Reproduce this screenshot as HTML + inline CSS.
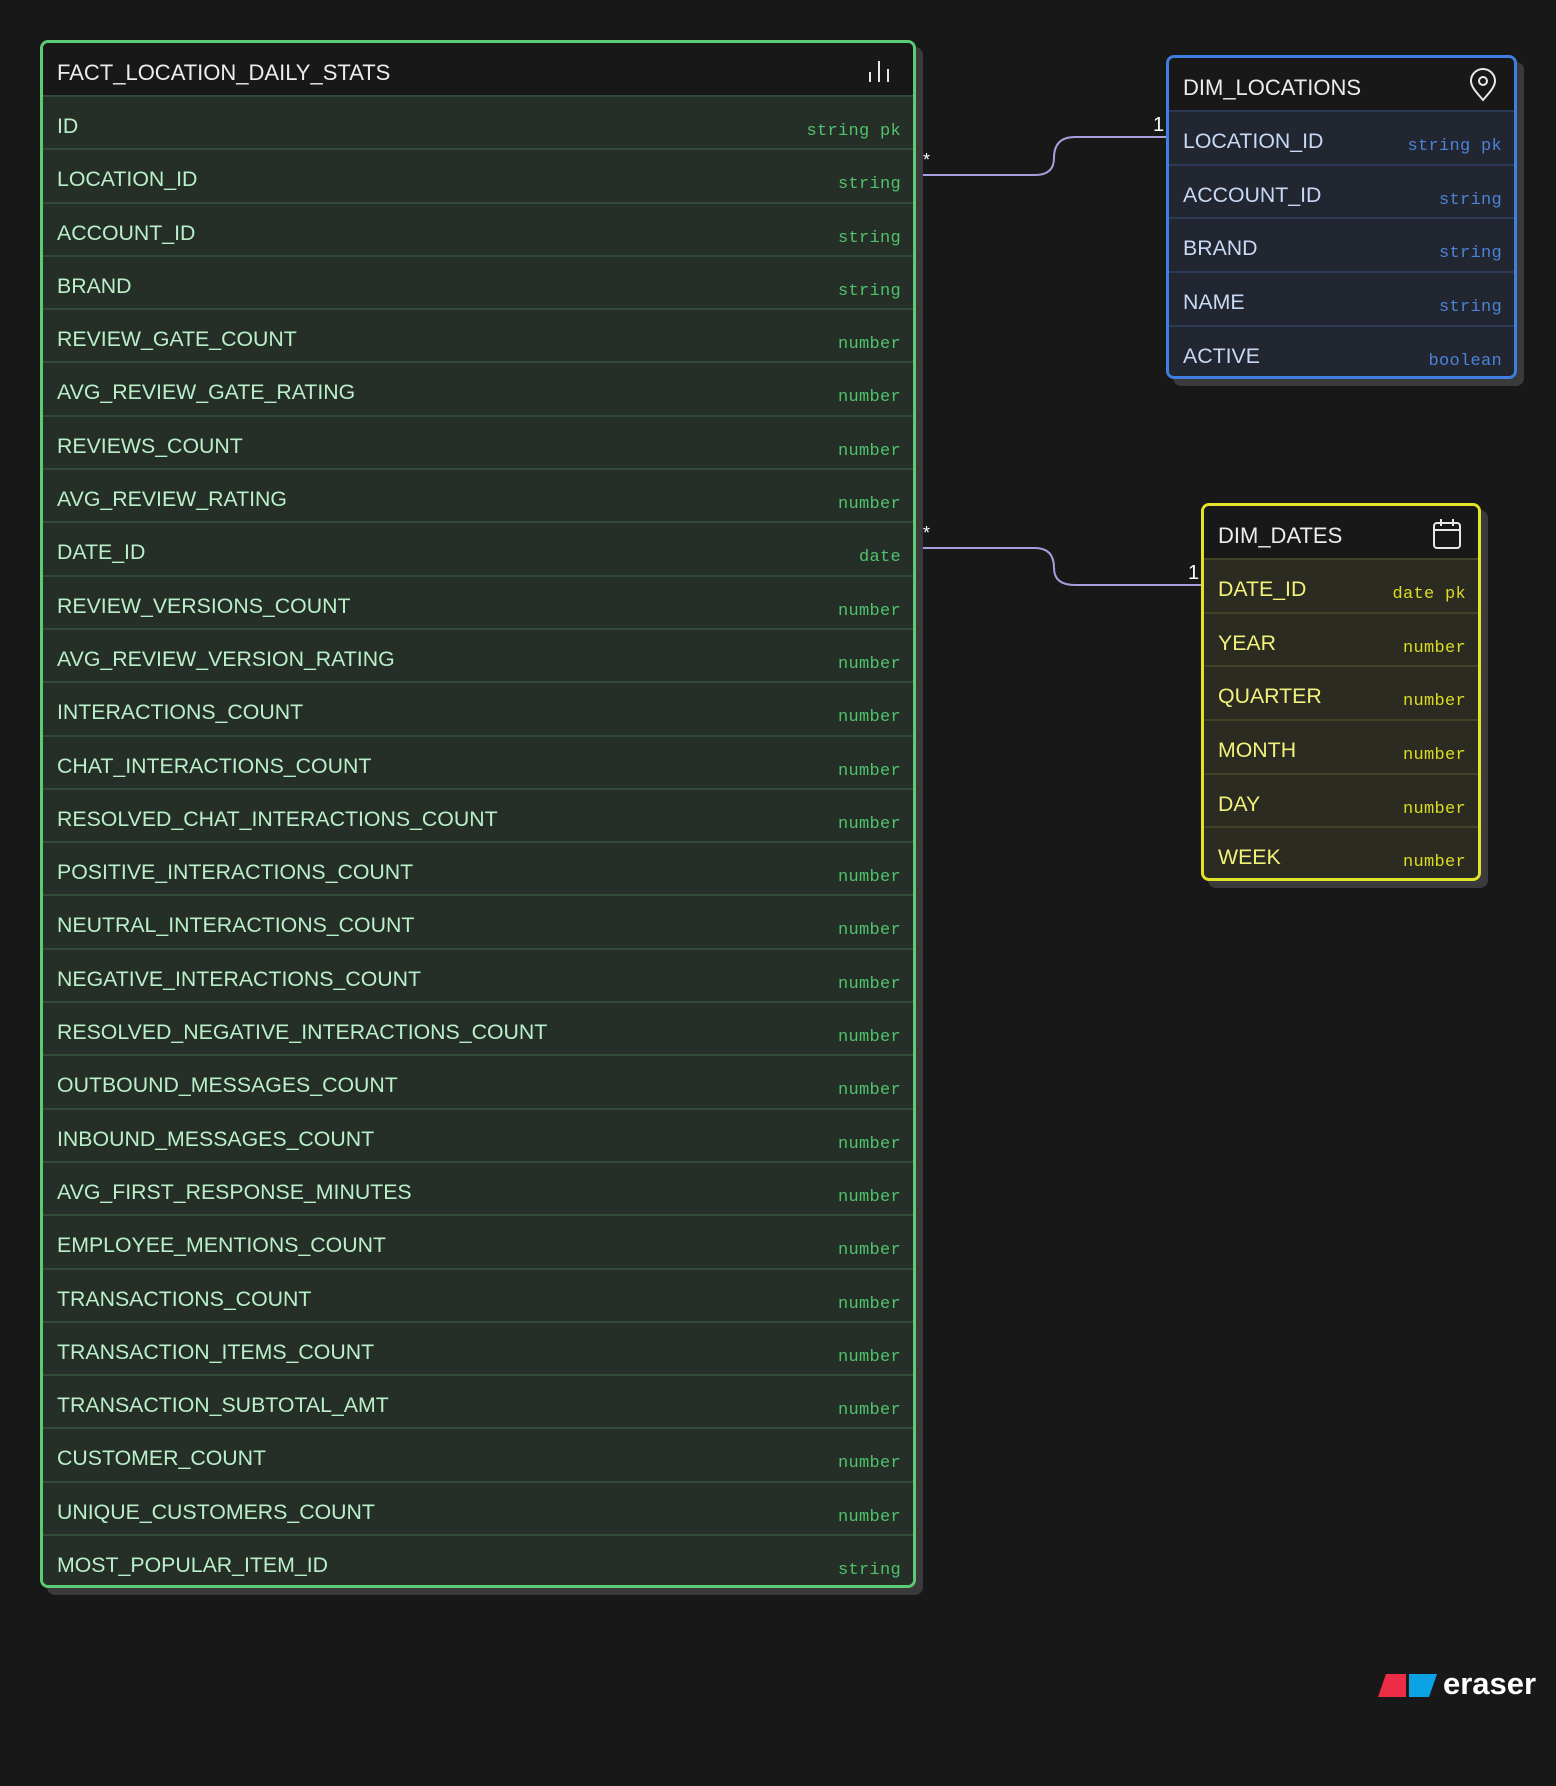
<!DOCTYPE html>
<html><head><meta charset="utf-8"><style>
*{margin:0;padding:0;box-sizing:border-box}
body{width:1556px;height:1786px;background:#181818;position:relative;overflow:hidden;font-family:"Liberation Sans",sans-serif}
.t{position:absolute;border:3px solid;border-radius:8px;box-shadow:7px 7px 0 #3a3a3a;overflow:hidden}
.h{height:52px;background:#181818;color:#ececec;font-size:22px;padding:17px 0 0 14px;position:relative}
.r{position:relative;border-top:2px solid}
.r .n{position:absolute;left:14px;top:17px;font-size:21.3px}
.r .ty{position:absolute;right:12px;top:25px;font-family:"Liberation Mono",monospace;font-size:17px;letter-spacing:0.3px;white-space:pre}
.f{border-color:#5ccb76}.f .r{background:#262e28;border-color:#334a38;height:53.3px}.f .n{color:#b9f0c9}.f .ty{color:#4fc36b}
.l{border-color:#3f7fe2}.l .r{background:#222630;border-color:#2d3a55;height:53.7px}.l .n{color:#c8d9f6}.l .ty{color:#4a83d8}
.d{border-color:#e3e32a}.d .r{background:#2b2b22;border-color:#424228;height:53.7px}.d .n{color:#f2f27a}.d .ty{color:#dcdc22}
.lbl{position:absolute;color:#fff;font-size:20px}
</style></head><body>

<svg style="position:absolute;left:0;top:0" width="1556" height="1786">
<path d="M913 175 H1035 Q1054 175 1054 158 Q1054 137 1075 137 H1167" fill="none" stroke="#a99ddb" stroke-width="2"/>
<path d="M913 548 H1035 Q1054 548 1054 568 Q1054 585 1075 585 H1203" fill="none" stroke="#a99ddb" stroke-width="2"/>
</svg>
<div class="lbl" style="left:923px;top:150px;font-size:18px">*</div>
<div class="lbl" style="left:923px;top:523px;font-size:18px">*</div>
<div class="lbl" style="left:1153px;top:114px">1</div>
<div class="lbl" style="left:1188px;top:562px">1</div>

<div class="t f" style="left:40px;top:40px;width:876px;height:1548px">
<div class="h">FACT_LOCATION_DAILY_STATS
<svg style="position:absolute;right:22px;top:15px" width="24" height="26" stroke="#e8e8e8" stroke-width="2"><path d="M3 24V14M12 24V3M21 24V11"/></svg></div>
<div class="r"><span class="n">ID</span><span class="ty">string pk</span></div>
<div class="r"><span class="n">LOCATION_ID</span><span class="ty">string</span></div>
<div class="r"><span class="n">ACCOUNT_ID</span><span class="ty">string</span></div>
<div class="r"><span class="n">BRAND</span><span class="ty">string</span></div>
<div class="r"><span class="n">REVIEW_GATE_COUNT</span><span class="ty">number</span></div>
<div class="r"><span class="n">AVG_REVIEW_GATE_RATING</span><span class="ty">number</span></div>
<div class="r"><span class="n">REVIEWS_COUNT</span><span class="ty">number</span></div>
<div class="r"><span class="n">AVG_REVIEW_RATING</span><span class="ty">number</span></div>
<div class="r"><span class="n">DATE_ID</span><span class="ty">date</span></div>
<div class="r"><span class="n">REVIEW_VERSIONS_COUNT</span><span class="ty">number</span></div>
<div class="r"><span class="n">AVG_REVIEW_VERSION_RATING</span><span class="ty">number</span></div>
<div class="r"><span class="n">INTERACTIONS_COUNT</span><span class="ty">number</span></div>
<div class="r"><span class="n">CHAT_INTERACTIONS_COUNT</span><span class="ty">number</span></div>
<div class="r"><span class="n">RESOLVED_CHAT_INTERACTIONS_COUNT</span><span class="ty">number</span></div>
<div class="r"><span class="n">POSITIVE_INTERACTIONS_COUNT</span><span class="ty">number</span></div>
<div class="r"><span class="n">NEUTRAL_INTERACTIONS_COUNT</span><span class="ty">number</span></div>
<div class="r"><span class="n">NEGATIVE_INTERACTIONS_COUNT</span><span class="ty">number</span></div>
<div class="r"><span class="n">RESOLVED_NEGATIVE_INTERACTIONS_COUNT</span><span class="ty">number</span></div>
<div class="r"><span class="n">OUTBOUND_MESSAGES_COUNT</span><span class="ty">number</span></div>
<div class="r"><span class="n">INBOUND_MESSAGES_COUNT</span><span class="ty">number</span></div>
<div class="r"><span class="n">AVG_FIRST_RESPONSE_MINUTES</span><span class="ty">number</span></div>
<div class="r"><span class="n">EMPLOYEE_MENTIONS_COUNT</span><span class="ty">number</span></div>
<div class="r"><span class="n">TRANSACTIONS_COUNT</span><span class="ty">number</span></div>
<div class="r"><span class="n">TRANSACTION_ITEMS_COUNT</span><span class="ty">number</span></div>
<div class="r"><span class="n">TRANSACTION_SUBTOTAL_AMT</span><span class="ty">number</span></div>
<div class="r"><span class="n">CUSTOMER_COUNT</span><span class="ty">number</span></div>
<div class="r"><span class="n">UNIQUE_CUSTOMERS_COUNT</span><span class="ty">number</span></div>
<div class="r"><span class="n">MOST_POPULAR_ITEM_ID</span><span class="ty">string</span></div>
</div>

<div class="t l" style="left:1166px;top:55px;width:351px;height:324px">
<div class="h">DIM_LOCATIONS
<svg style="position:absolute;right:16px;top:10px" width="30" height="34" fill="none" stroke="#e8e8e8" stroke-width="2"><path d="M15 32C9 25 3 19 3 13A12 12 0 0 1 27 13C27 19 21 25 15 32Z"/><circle cx="15" cy="13" r="4"/></svg></div>
<div class="r"><span class="n">LOCATION_ID</span><span class="ty">string pk</span></div>
<div class="r"><span class="n">ACCOUNT_ID</span><span class="ty">string</span></div>
<div class="r"><span class="n">BRAND</span><span class="ty">string</span></div>
<div class="r"><span class="n">NAME</span><span class="ty">string</span></div>
<div class="r"><span class="n">ACTIVE</span><span class="ty">boolean</span></div>
</div>

<div class="t d" style="left:1201px;top:503px;width:280px;height:378px">
<div class="h">DIM_DATES
<svg style="position:absolute;right:16px;top:12px" width="30" height="32" fill="none" stroke="#e8e8e8" stroke-width="2"><rect x="2" y="5" width="26" height="25" rx="3"/><path d="M2 12H28M9 1V8M21 1V8"/></svg></div>
<div class="r"><span class="n">DATE_ID</span><span class="ty">date pk</span></div>
<div class="r"><span class="n">YEAR</span><span class="ty">number</span></div>
<div class="r"><span class="n">QUARTER</span><span class="ty">number</span></div>
<div class="r"><span class="n">MONTH</span><span class="ty">number</span></div>
<div class="r"><span class="n">DAY</span><span class="ty">number</span></div>
<div class="r"><span class="n">WEEK</span><span class="ty">number</span></div>
</div>

<svg style="position:absolute;left:1378px;top:1674px" width="60" height="24"><path d="M8 0H28V23H0Z" fill="#ec2d45"/><path d="M31 0H59L51 23H31Z" fill="#0aa2e4"/></svg>
<div style="position:absolute;left:1443px;top:1666px;color:#fff;font-size:31px;font-weight:bold">eraser</div>
</body></html>
